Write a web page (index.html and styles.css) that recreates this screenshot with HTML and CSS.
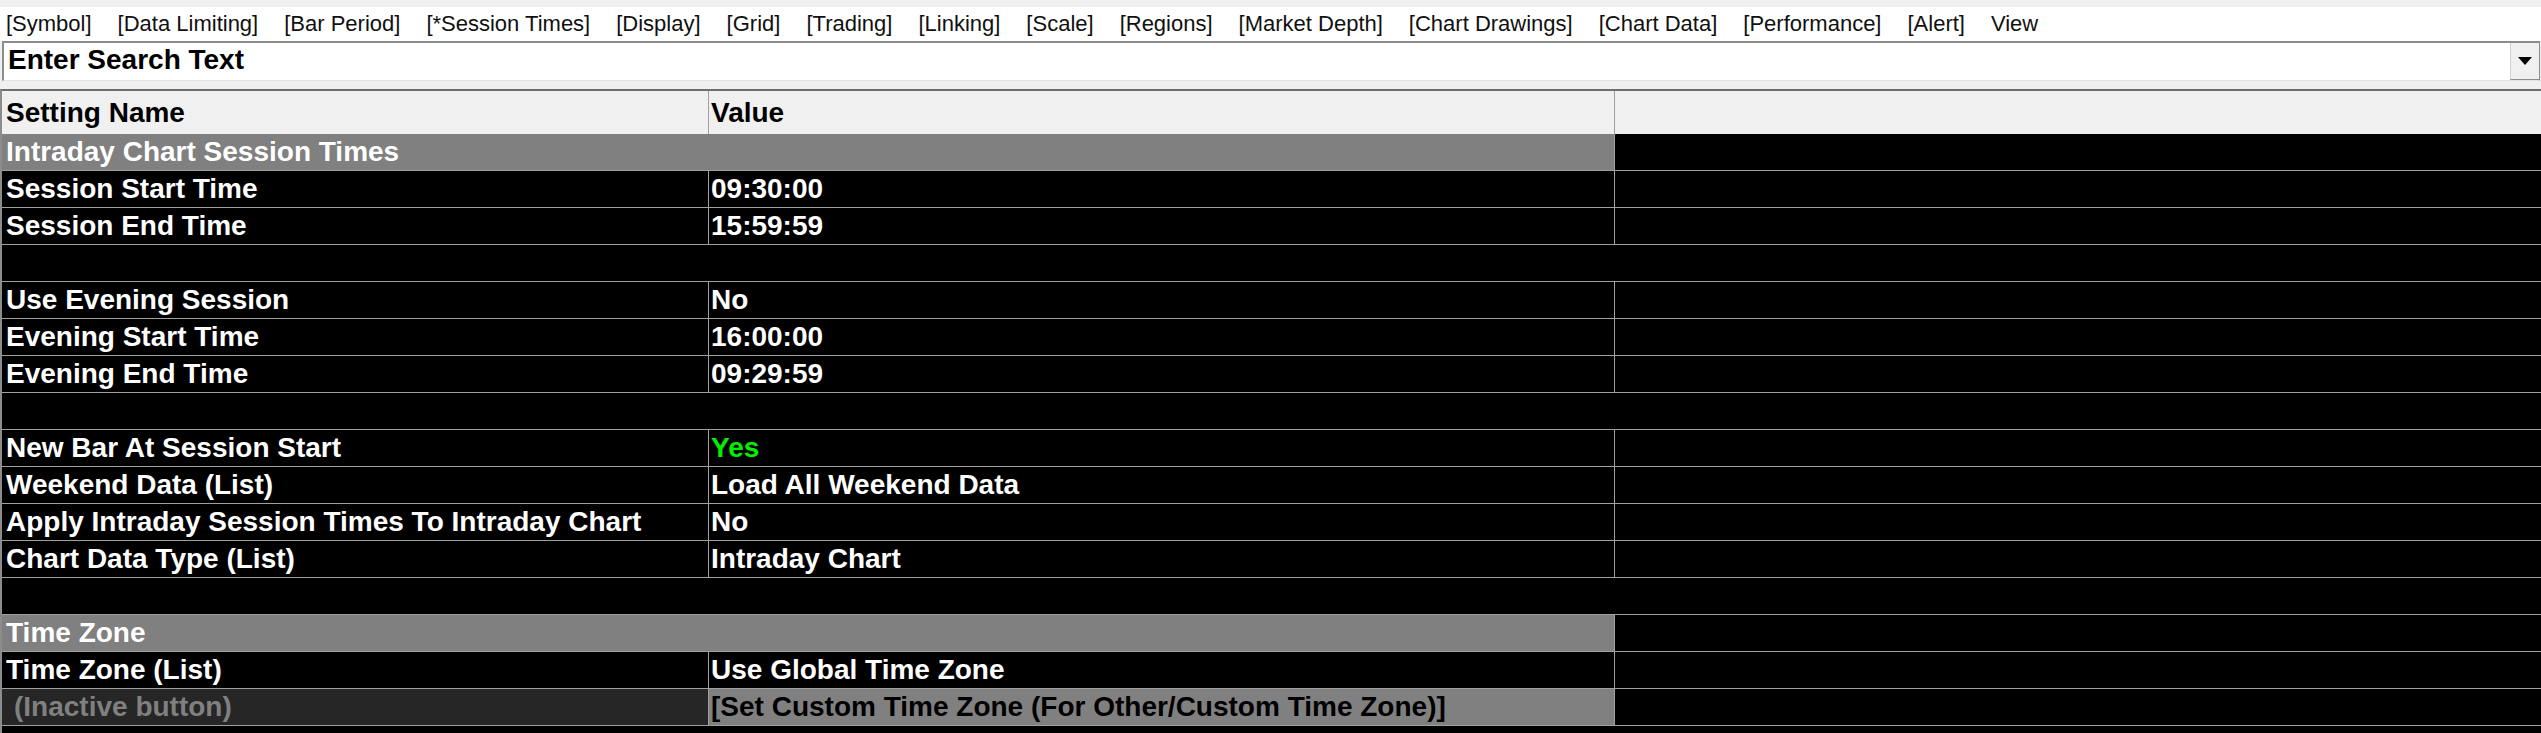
FILE: index.html
```html
<!DOCTYPE html>
<html lang="en">
<head>
<meta charset="utf-8">
<title>Chart Settings</title>
<link rel="stylesheet" href="styles.css">
</head>
<body>
<div class="window">
  <div class="top-strip"></div>

  <nav class="menu">
    <span class="menu-item">[Symbol]</span>
    <span class="menu-item">[Data Limiting]</span>
    <span class="menu-item">[Bar Period]</span>
    <span class="menu-item">[*Session Times]</span>
    <span class="menu-item">[Display]</span>
    <span class="menu-item">[Grid]</span>
    <span class="menu-item">[Trading]</span>
    <span class="menu-item">[Linking]</span>
    <span class="menu-item">[Scale]</span>
    <span class="menu-item">[Regions]</span>
    <span class="menu-item">[Market Depth]</span>
    <span class="menu-item">[Chart Drawings]</span>
    <span class="menu-item">[Chart Data]</span>
    <span class="menu-item">[Performance]</span>
    <span class="menu-item">[Alert]</span>
    <span class="menu-item">View</span>
  </nav>

  <div class="search">
    <div class="search-text">Enter Search Text</div>
    <div class="search-button">
      <svg width="14" height="8" viewBox="0 0 14 8"><polygon points="0,0 14,0 7,8" fill="#000"/></svg>
    </div>
  </div>

  <div class="list">
    <div class="row header">
      <div class="cell name">Setting Name</div>
      <div class="cell value">Value</div>
      <div class="cell rest"></div>
    </div>

    <div class="row group">
      <div class="cell span">Intraday Chart Session Times</div>
      <div class="cell rest"></div>
    </div>
    <div class="row">
      <div class="cell name">Session Start Time</div>
      <div class="cell value">09:30:00</div>
      <div class="cell rest"></div>
    </div>
    <div class="row">
      <div class="cell name">Session End Time</div>
      <div class="cell value">15:59:59</div>
      <div class="cell rest"></div>
    </div>
    <div class="row blank"></div>
    <div class="row">
      <div class="cell name">Use Evening Session</div>
      <div class="cell value">No</div>
      <div class="cell rest"></div>
    </div>
    <div class="row">
      <div class="cell name">Evening Start Time</div>
      <div class="cell value">16:00:00</div>
      <div class="cell rest"></div>
    </div>
    <div class="row">
      <div class="cell name">Evening End Time</div>
      <div class="cell value">09:29:59</div>
      <div class="cell rest"></div>
    </div>
    <div class="row blank"></div>
    <div class="row">
      <div class="cell name">New Bar At Session Start</div>
      <div class="cell value yes">Yes</div>
      <div class="cell rest"></div>
    </div>
    <div class="row">
      <div class="cell name">Weekend Data (List)</div>
      <div class="cell value">Load All Weekend Data</div>
      <div class="cell rest"></div>
    </div>
    <div class="row">
      <div class="cell name">Apply Intraday Session Times To Intraday Chart</div>
      <div class="cell value">No</div>
      <div class="cell rest"></div>
    </div>
    <div class="row">
      <div class="cell name">Chart Data Type (List)</div>
      <div class="cell value">Intraday Chart</div>
      <div class="cell rest"></div>
    </div>
    <div class="row blank"></div>

    <div class="row group">
      <div class="cell span">Time Zone</div>
      <div class="cell rest"></div>
    </div>
    <div class="row">
      <div class="cell name">Time Zone (List)</div>
      <div class="cell value">Use Global Time Zone</div>
      <div class="cell rest"></div>
    </div>
    <div class="row">
      <div class="cell name inactive">(Inactive button)</div>
      <div class="cell value button">[Set Custom Time Zone (For Other/Custom Time Zone)]</div>
      <div class="cell rest"></div>
    </div>
  </div>
</div>
</body>
</html>
```

FILE: styles.css
```css
* {
  box-sizing: border-box;
}

html, body {
  margin: 0;
  padding: 0;
}

body {
  background: #f0f0f0;
  width: 2541px;
  height: 733px;
  overflow: hidden;
}

.window {
  display: flex;
  flex-direction: column;
  height: 733px;
}

.top-strip {
  height: 7px;
  background: #f0f0f0;
  flex: none;
}

/* Tab menu */
.menu {
  flex: none;
  height: 34px;
  background: #ffffff;
  display: flex;
  align-items: stretch;
  gap: 26px;
  padding-left: 6px;
  font-family: "Liberation Sans", Arial, sans-serif;
  font-size: 22px;
  line-height: 34px;
  color: #101010;
  white-space: nowrap;
}

/* Search combo box */
.search {
  flex: none;
  display: flex;
  height: 40px;
  margin-left: 2px;
  margin-right: 1px;
  background: #ffffff;
  border-top: 2px solid #8c8c8c;
  border-left: 2px solid #8c8c8c;
  border-right: 1px solid #8c8c8c;
  border-bottom: 1px solid #e3e3e3;
}

.search-text {
  flex: 1;
  padding-left: 4px;
  padding-bottom: 3px;
  font-family: "Liberation Sans", Arial, sans-serif;
  font-weight: bold;
  font-size: 28px;
  line-height: 34px;
  color: #000;
}

.search-button {
  flex: none;
  width: 29px;
  background: #f0f0f0;
  border-left: 1px solid #d0d0d0;
  border-bottom: 1px solid #8c8c8c;
  display: flex;
  align-items: center;
  justify-content: center;
}

/* Settings list */
.list {
  flex: 1;
  margin-top: 8px;
  background: #000000;
  border-top: 2px solid #6e6e6e;
  border-left: 2px solid #8c8c8c;
  font-family: "Liberation Sans", Arial, sans-serif;
  font-weight: bold;
  font-size: 28px;
  color: #ffffff;
  white-space: nowrap;
}

.row {
  display: flex;
  height: 37px;
  border-bottom: 1px solid #a0a0a0;
  line-height: 36px;
}

.cell {
  flex: none;
  overflow: hidden;
}

.name {
  width: 707px;
  padding-left: 4px;
  border-right: 1px solid #a0a0a0;
}

.value {
  width: 906px;
  padding-left: 2px;
  border-right: 1px solid #a0a0a0;
}

.rest {
  flex: 1;
}

.header {
  height: 43px;
  line-height: 43px;
  border-bottom: none;
  background: #f0f0f0;
  color: #000;
}

.group .span {
  width: 1613px;
  padding-left: 4px;
  background: #808080;
  border-right: 1px solid #a0a0a0;
}

.yes {
  color: #00f000;
}

.inactive {
  background: #262626;
  color: #808080;
  padding-left: 12px;
}

.button {
  background: #808080;
  color: #000;
}
```
